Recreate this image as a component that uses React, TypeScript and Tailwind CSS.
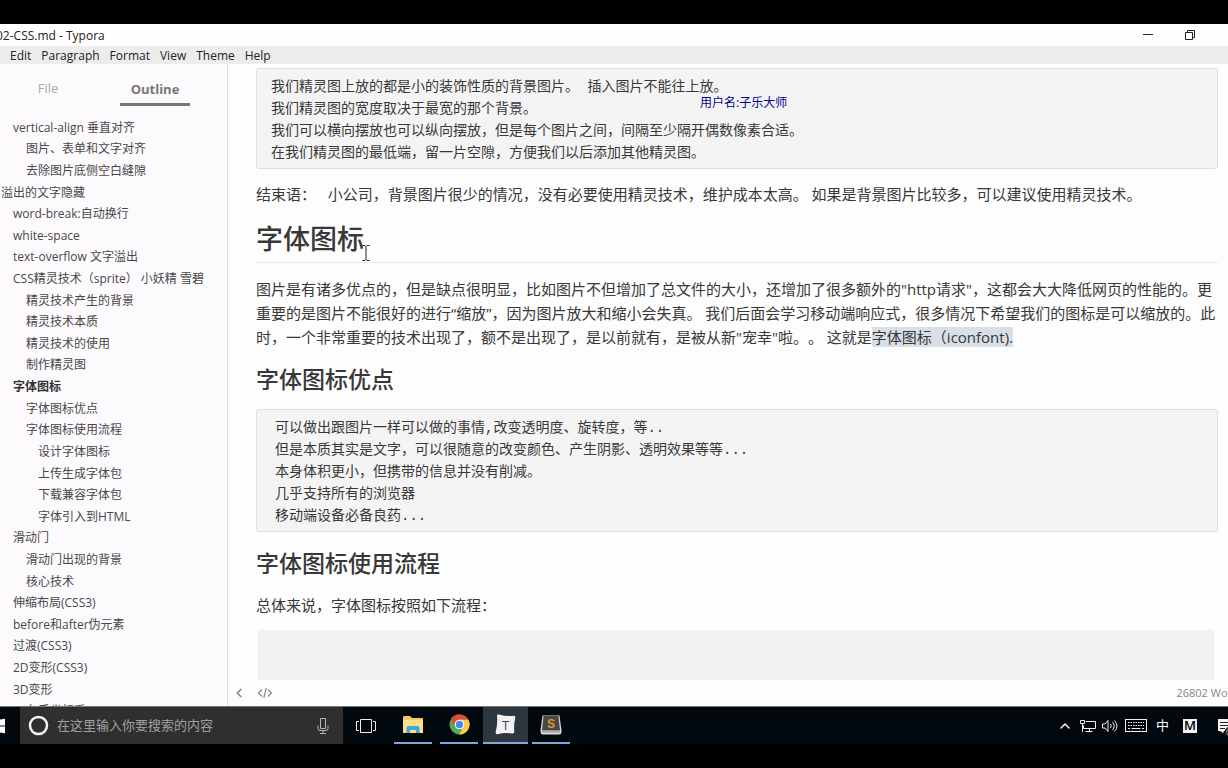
import { ChevronLeft, ChevronUp, Mic } from 'lucide-react'

const SANS = "font-['Open_Sans','Noto_Sans_CJK_SC',sans-serif]"

const menus = ['Edit', 'Paragraph', 'Format', 'View', 'Theme', 'Help']

const outline: { text: string; level: number; active?: boolean }[] = [
  { text: 'vertical-align 垂直对齐', level: 2 },
  { text: '图片、表单和文字对齐', level: 3 },
  { text: '去除图片底侧空白缝隙', level: 3 },
  { text: '溢出的文字隐藏', level: 1 },
  { text: 'word-break:自动换行', level: 2 },
  { text: 'white-space', level: 2 },
  { text: 'text-overflow 文字溢出', level: 2 },
  { text: 'CSS精灵技术（sprite） 小妖精 雪碧', level: 2 },
  { text: '精灵技术产生的背景', level: 3 },
  { text: '精灵技术本质', level: 3 },
  { text: '精灵技术的使用', level: 3 },
  { text: '制作精灵图', level: 3 },
  { text: '字体图标', level: 2, active: true },
  { text: '字体图标优点', level: 3 },
  { text: '字体图标使用流程', level: 3 },
  { text: '设计字体图标', level: 4 },
  { text: '上传生成字体包', level: 4 },
  { text: '下载兼容字体包', level: 4 },
  { text: '字体引入到HTML', level: 4 },
  { text: '滑动门', level: 2 },
  { text: '滑动门出现的背景', level: 3 },
  { text: '核心技术', level: 3 },
  { text: '伸缩布局(CSS3)', level: 2 },
  { text: 'before和after伪元素', level: 2 },
  { text: '过渡(CSS3)', level: 2 },
  { text: '2D变形(CSS3)', level: 2 },
  { text: '3D变形', level: 2 },
  { text: '左手坐标系', level: 3 },
]

const indent: Record<number, string> = {
  1: 'pl-px',
  2: 'pl-[13px]',
  3: 'pl-[26px]',
  4: 'pl-[38px]',
}

const spriteNotes = `我们精灵图上放的都是小的装饰性质的背景图片。 插入图片不能往上放。
我们精灵图的宽度取决于最宽的那个背景。
我们可以横向摆放也可以纵向摆放，但是每个图片之间，间隔至少隔开偶数像素合适。
在我们精灵图的最低端，留一片空隙，方便我们以后添加其他精灵图。`

const iconNotes = `可以做出跟图片一样可以做的事情,改变透明度、旋转度，等..
但是本质其实是文字，可以很随意的改变颜色、产生阴影、透明效果等等...
本身体积更小，但携带的信息并没有削减。
几乎支持所有的浏览器
移动端设备必备良药...`

function TitleBar() {
  return (
    <header className="flex h-[22px] shrink-0 items-center justify-between overflow-hidden bg-[#fefefe] text-xs text-[#222]">
      <h1 className="-ml-1 whitespace-nowrap pt-px">02-CSS.md - Typora</h1>
      <div className="flex gap-[26px] pr-[30px]">
        <button aria-label="Minimize" className="flex w-4 items-center justify-center">
          <svg width="10" height="10" viewBox="0 0 10 10" stroke="#222">
            <path d="M0 4.5h10" />
          </svg>
        </button>
        <button aria-label="Restore" className="flex w-4 items-center justify-center">
          <svg width="10" height="10" viewBox="0 0 10 10" fill="none" stroke="#222">
            <path d="M0.5 2.5h7v7h-7zM2.5 2.5v-2h7v7h-2" />
          </svg>
        </button>
      </div>
    </header>
  )
}

function MenuBar() {
  return (
    <nav className="flex h-[18px] shrink-0 items-center gap-[10px] bg-[#ececec] pl-[10px] pt-px text-xs text-[#222]">
      {menus.map(item => (
        <button key={item}>{item}</button>
      ))}
    </nav>
  )
}

function Sidebar() {
  return (
    <aside className="flex w-[228px] shrink-0 flex-col overflow-hidden border-r border-[#dfd9e0] bg-[#fcfafd] text-xs">
      <div className="flex h-[42px] shrink-0 items-stretch pl-[13px] text-[13px]">
        <button className="w-[70px] pt-2 text-[#aaa]">File</button>
        <button className="ml-[37px] w-[70px] border-b-[3px] border-[#777] pt-3 font-bold text-[#777]">Outline</button>
      </div>
      <ul className="mt-[11px] grid h-[605px] shrink-0 auto-rows-fr">
        {outline.map(item => (
          <li key={item.text} className={`flex items-center whitespace-nowrap leading-5 ${indent[item.level]}`}>
            <a href="#" className={item.active ? 'font-bold text-[#333]' : 'text-[#484848]'}>
              {item.text}
            </a>
          </li>
        ))}
      </ul>
    </aside>
  )
}

function CodeBlock({ code, className = '' }: { code: string; className?: string }) {
  return (
    <pre className={`overflow-hidden rounded-[3px] border border-[#dedede] bg-[#f4f4f4] pb-1 pt-[7px] font-['Liberation_Mono','Noto_Sans_CJK_SC',monospace] text-sm leading-[22px] text-[#383838] ${className}`}>
      {code}
    </pre>
  )
}

function Editor() {
  return (
    <main className="relative flex min-w-0 flex-1 flex-col bg-[#fdfdfd]">
      <article className="flex min-h-0 flex-1 flex-col overflow-hidden pl-7 pr-[10px] pt-1 text-[15px] leading-6 text-[#383838]">
        <CodeBlock code={spriteNotes} className="shrink-0 pl-[14px]" />
        <p className="mt-[13px] whitespace-nowrap">
          结束语：&nbsp;&nbsp; 小公司，背景图片很少的情况，没有必要使用精灵技术，维护成本太高。 如果是背景图片比较多，可以建议使用精灵技术。
        </p>
        <h2 className="mt-[15px] border-b border-[#eaeaea] pb-[5px] text-[27px] font-medium leading-9">字体图标</h2>
        <p className="mt-[14px] whitespace-nowrap [text-spacing-trim:space-all]">
          图片是有诸多优点的，但是缺点很明显，比如图片不但增加了总文件的大小，还增加了很多额外的"http请求"，这都会大大降低网页的性能的。更
          <br />
          重要的是图片不能很好的进行“缩放”，因为图片放大和缩小会失真。 我们后面会学习移动端响应式，很多情况下希望我们的图标是可以缩放的。此
          <br />
          时，一个非常重要的技术出现了，额不是出现了，是以前就有，是被从新"宠幸"啦。。 这就是
          <mark className="bg-[#d8dfe6] text-inherit">字体图标（iconfont).</mark>
        </p>
        <h3 className="mt-[14px] text-[23px] font-medium leading-8">字体图标优点</h3>
        <CodeBlock code={iconNotes} className="mt-[14px] shrink-0 pl-[18px]" />
        <h3 className="mt-[15px] text-[23px] font-medium leading-8">字体图标使用流程</h3>
        <p className="mt-[14px]">总体来说，字体图标按照如下流程：</p>
        <div className="ml-[2px] mr-1 mt-[13px] flex-1 bg-[#f3f1f4]" />
      </article>
      <footer className="flex h-[26px] shrink-0 items-center overflow-hidden pl-1 text-[11px] text-[#888]">
        <button aria-label="Toggle sidebar">
          <ChevronLeft size={14} strokeWidth={3} />
        </button>
        <button aria-label="Source mode" className="ml-[11px]">
          <svg width="16" height="12" viewBox="0 0 16 12" fill="none" stroke="#888" strokeWidth="1.2">
            <path d="M5 2.5L1.5 6L5 9.5M11 2.5L14.5 6L11 9.5M9.2 1L6.8 11" />
          </svg>
        </button>
        <span className="-mr-4 ml-auto whitespace-nowrap pt-px">26802 Words</span>
      </footer>
      <span className="absolute left-[472px] top-[30px] text-xs leading-[18px] text-[#00008b]">用户名:子乐大师</span>
      <svg className="absolute left-[134px] top-[181px]" width="8" height="16" viewBox="0 0 8 16" fill="none" stroke="#222">
        <path d="M0.5 0.5h2.5l1 1l1-1h2.5M4 1.5v13M0.5 15.5h2.5l1-1l1 1h2.5" />
      </svg>
    </main>
  )
}

function FolderIcon() {
  return (
    <svg width="20" height="18" viewBox="0 0 20 18">
      <path d="M0 1q0-1 1-1h6l2 2h10q1 0 1 1v14H0z" fill="#f2c95c" />
      <path d="M0 4h20v13H0z" fill="#fbe08a" />
      <path d="M3.500 17v-5q0-2 2-2h9q2 0 2 2v5h-3.500v-3H7v3z" fill="#3fa9d8" />
    </svg>
  )
}

function ChromeIcon() {
  return (
    <svg width="21" height="21" viewBox="0 0 48 48">
      <circle cx="24" cy="24" r="23" fill="#4caf50" />
      <path d="M24 24L4 12.5A23 23 0 0 1 44 12.5H24z" fill="#dd4b3e" />
      <path d="M24 13H44.2A23 23 0 0 1 23 47L33 29z" fill="#fccd43" />
      <path d="M4 12.5A23 23 0 0 1 24 1V24L14.500 29.500z" fill="#dd4b3e" />
      <circle cx="24" cy="24" r="11" fill="#fff" />
      <circle cx="24" cy="24" r="8.5" fill="#4a88ee" />
    </svg>
  )
}

function TyporaIcon() {
  return (
    <svg width="21" height="21" viewBox="0 0 21 21">
      <path d="M2 1.8Q2 0 4 0.5Q11 2.600 18.500 1.800Q20.800 1.800 20.300 4Q18.500 11 19.300 17.500Q19.500 20 17 19.500Q10 18.200 2.500 20.200Q0.200 20.400 0.700 18Q2.800 10 2 1.800z" fill="#f1f1f3" />
      <text x="10.500" y="15.500" textAnchor="middle" fontFamily="Open Sans, sans-serif" fontSize="13" fill="#444">T</text>
    </svg>
  )
}

function SublimeIcon() {
  return (
    <svg width="22" height="20" viewBox="0 0 22 20">
      <path d="M2.500 0.500h17l2 15q0 4-2 4H2.500q-2 0-2-4z" fill="#dcdcdc" />
      <path d="M3.500 1h15l1.500 14.500h-18z" fill="#484848" />
      <path d="M2 17h18" stroke="#888" />
      <text x="11" y="12.500" textAnchor="middle" fontFamily="Liberation Sans, sans-serif" fontWeight="bold" fontSize="12" fill="#e8923a">S</text>
    </svg>
  )
}

function Tray() {
  return (
    <div className="ml-auto flex shrink-0 items-center text-white">
      <button aria-label="Show hidden icons" className="mr-[7px]">
        <ChevronUp size={16} strokeWidth={2} />
      </button>
      <svg className="mr-[6px]" width="16" height="14" viewBox="0 0 16 14" fill="none" stroke="#eee">
        <path d="M5.500 2.500h10v7h-12v-3M9.500 9.500v3M5.500 12.500h7M2.500 5v8M0.500 1.500h4v3h-4z" />
      </svg>
      <svg className="mr-[7px]" width="16" height="14" viewBox="0 0 16 14" fill="none" stroke="#eee">
        <path d="M0.500 5h2.500l3-3.500v11l-3-3.500H0.500zM8.500 5q1.500 2 0 4M10.500 3q3.500 4 0 8M12.500 1.500q5 5.500 0 11" />
      </svg>
      <svg className="mr-[9px]" width="22" height="13" viewBox="0 0 22 13" fill="none" stroke="#eee">
        <rect x="0.500" y="0.500" width="21" height="12" />
        <path d="M3 3.500h16M3 6.500h16" strokeDasharray="1.500 1" />
        <path d="M3 9.500h2M6.500 9.500h9M17 9.500h2" />
      </svg>
      <span className="w-4 text-[13px]">中</span>
      <span className="ml-[11px] flex size-[14px] items-center justify-center bg-[#f3f3f3] text-[13px] font-semibold text-black">M</span>
      <svg className="ml-[21px]" width="10" height="20" viewBox="0 0 10 20">
        <path d="M0 3h10v12H6l-1 2l-3-2H0z" fill="#f3f3f3" />
        <path d="M2 6.500h8M2 9.500h8M2 12.500h5" stroke="#222" />
        <circle cx="12" cy="16" r="5" fill="#555" stroke="#111" />
      </svg>
    </div>
  )
}

function Taskbar() {
  return (
    <footer className="flex h-[38px] shrink-0 overflow-hidden border-t border-[#777] bg-[#01090e]">
      <button aria-label="Start" className="w-5 shrink-0">
        <svg width="5" height="16" viewBox="0 0 5 16" fill="#fff">
          <path d="M0 1.500L5 0.800V7.500H0zM0 8.500H5V15.200L0 14.500z" />
        </svg>
      </button>
      <label className="flex w-[323px] shrink-0 items-center bg-[#2f2f2f] pl-2">
        <svg width="21" height="21" viewBox="0 0 21 21" fill="none">
          <circle cx="10.500" cy="10.500" r="8.500" stroke="#f2f2f2" strokeWidth="2.500" />
        </svg>
        <input
          aria-label="搜索"
          placeholder="在这里输入你要搜索的内容"
          className="ml-2 min-w-0 flex-1 bg-transparent text-[13px] outline-none placeholder:text-[#a0a0a0]"
        />
        <svg className="mr-[14px]" width="12" height="16" viewBox="0 0 12 16" fill="none" stroke="#b5b5b5">
          <path d="M3.500 0.500h5v10h-5zM1 7.500v3q0 2 2 2h6q2 0 2-2v-3M6 12.500v3M3 15.500h6" />
        </svg>
      </label>
      <button aria-label="Task view" className="flex w-[45px] shrink-0 items-center justify-center">
        <svg width="20" height="14" viewBox="0 0 20 14" fill="none" stroke="#eee">
          <path d="M4.500 0.500h11v13h-11zM3 2.500H0.500v9H3M17 2.500h2.500v9H17" />
        </svg>
      </button>
      <button aria-label="File Explorer" className="ml-[6px] flex w-[38px] items-center justify-center border-b-2 border-[#7aaade]">
        <FolderIcon />
      </button>
      <button aria-label="Chrome" className="ml-2 flex w-[38px] items-center justify-center border-b-2 border-[#7aaade]">
        <ChromeIcon />
      </button>
      <button aria-label="Typora" className="ml-[5px] flex w-[45px] items-center justify-center border-b-2 border-[#7aaade] bg-[#2b363f]">
        <TyporaIcon />
      </button>
      <button aria-label="Sublime Text" className="ml-1 flex w-[38px] items-center justify-center border-b-2 border-[#7aaade]">
        <SublimeIcon />
      </button>
      <Tray />
    </footer>
  )
}

export default function App() {
  return (
    <div className={`flex h-screen flex-col overflow-hidden bg-black py-6 ${SANS}`}>
      <TitleBar />
      <MenuBar />
      <div className="flex min-h-0 flex-1">
        <Sidebar />
        <Editor />
      </div>
      <Taskbar />
    </div>
  )
}
